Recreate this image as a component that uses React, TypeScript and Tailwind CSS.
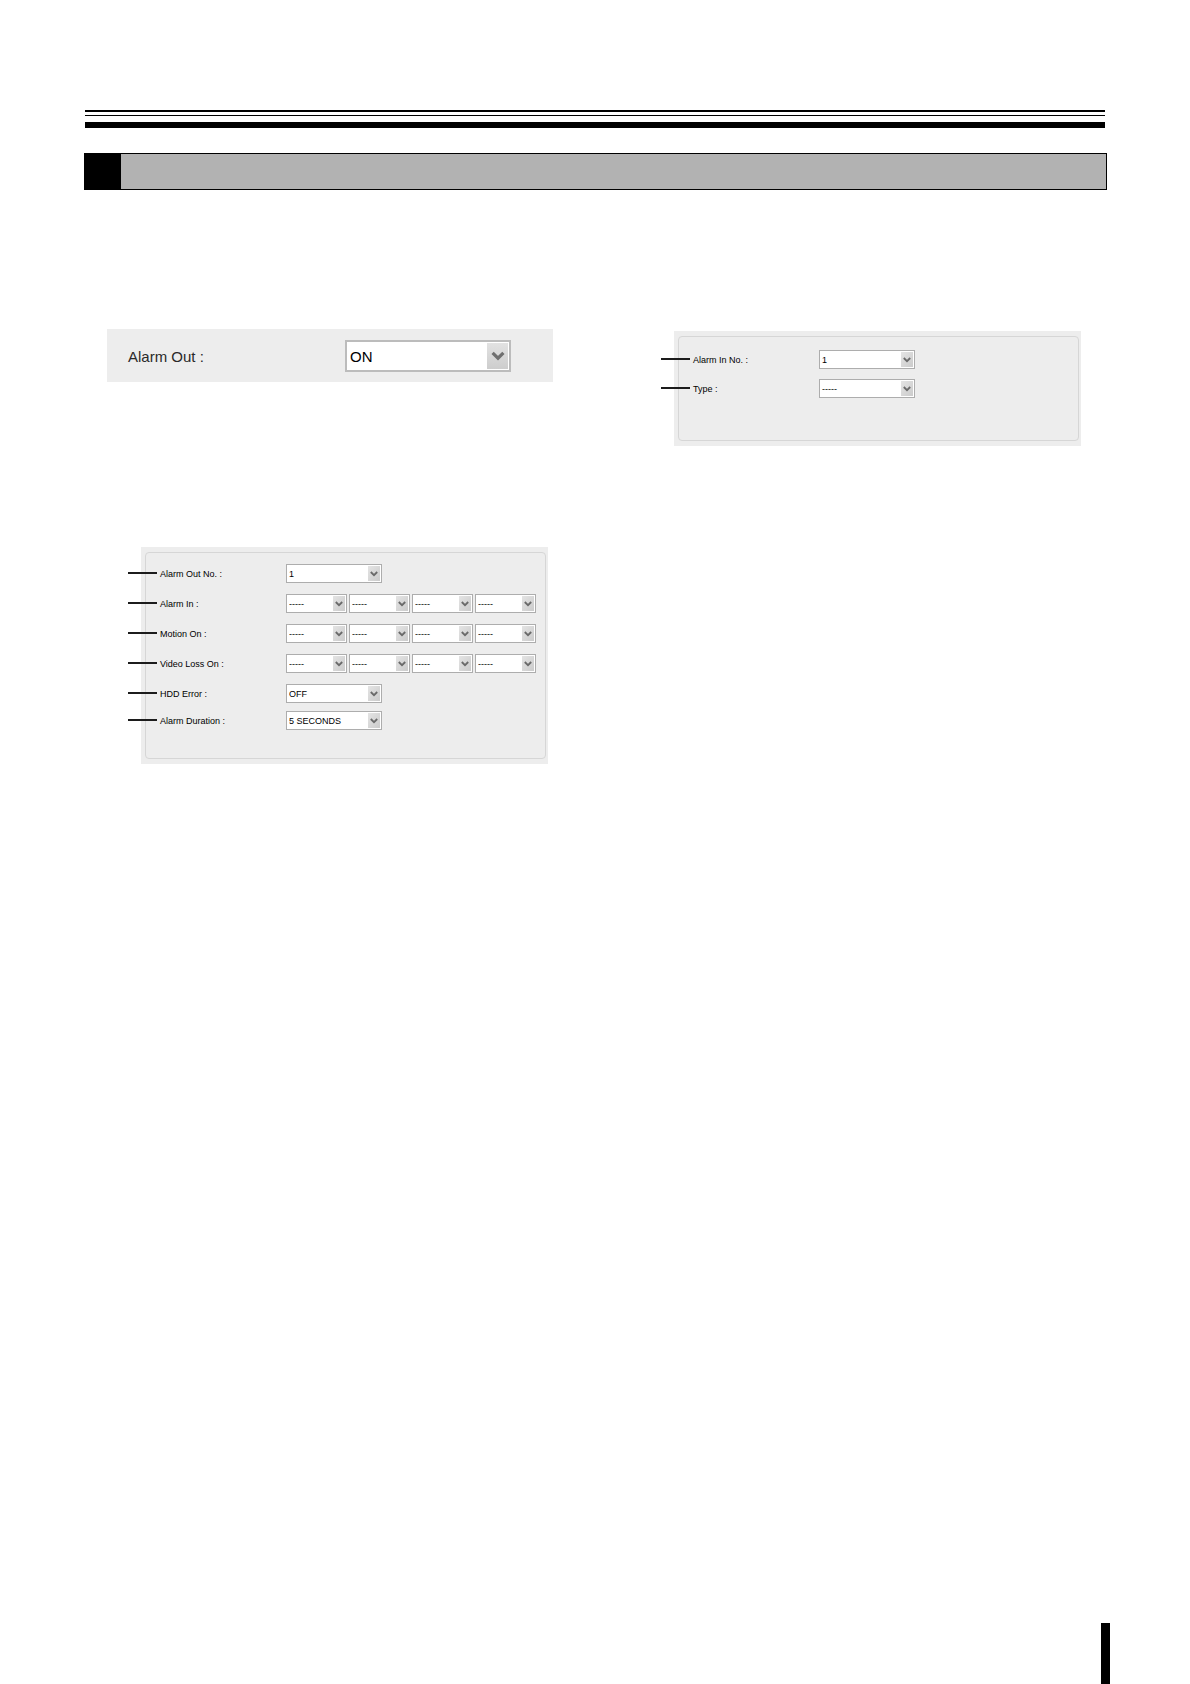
import React from 'react';

type SelectProps = {
  id?: string;
  labelledBy?: string;
  value: string;
  className: string;
};

type Row = {
  id: string;
  label: string;
  values: string[];
};

const alarmOutRows: Row[] = [
  { id: 'alarm-out-no', label: 'Alarm Out No. :', values: ['1'] },
  { id: 'alarm-in', label: 'Alarm In :', values: ['-----', '-----', '-----', '-----'] },
  { id: 'motion-on', label: 'Motion On :', values: ['-----', '-----', '-----', '-----'] },
  { id: 'video-loss-on', label: 'Video Loss On :', values: ['-----', '-----', '-----', '-----'] },
  { id: 'hdd-error', label: 'HDD Error :', values: ['OFF'] },
];

const durationRow: Row = { id: 'alarm-duration', label: 'Alarm Duration :', values: ['5 SECONDS'] };

const alarmInRows: Row[] = [
  { id: 'alarm-in-no', label: 'Alarm In No. :', values: ['1'] },
  { id: 'alarm-type', label: 'Type :', values: ['-----'] },
];

function SmallSelect({ id, labelledBy, value, className }: SelectProps) {
  return (
    <div className={`relative shrink-0 ${className}`}>
      <select
        id={id}
        aria-labelledby={labelledBy}
        defaultValue={value}
        className="block h-[19px] w-full appearance-none border border-[#adadad] bg-white pl-[2px] pr-4 leading-4 text-black"
      >
        <option>{value}</option>
      </select>
      <span className="pointer-events-none absolute inset-y-[2px] right-[2px] flex w-3 items-center justify-center bg-linear-to-br from-[#e4e4e4] to-[#cbcbcb]">
        <svg viewBox="0 0 8 6" className="h-[6px] w-2" fill="none" stroke="#6a6a6a" strokeWidth="1.8">
          <path d="M0.8 1 L4 4.2 L7.2 1" />
        </svg>
      </span>
    </div>
  );
}

function FieldRow({ row }: { row: Row }) {
  const single = row.values.length === 1;
  return (
    <div className="relative flex items-center">
      {/* leader line running in from the page margin */}
      <span className="absolute -left-8 top-2 h-[2px] w-[29px] bg-[#1c1c1c]" />
      <label id={`${row.id}-label`} htmlFor={row.id} className="w-[126px] shrink-0 whitespace-nowrap">
        {row.label}
      </label>
      <div className="flex gap-[2px]">
        {row.values.map((value, i) => (
          <SmallSelect
            key={i}
            id={i === 0 ? row.id : undefined}
            labelledBy={`${row.id}-label`}
            value={value}
            className={single ? 'w-24' : 'w-[61px]'}
          />
        ))}
      </div>
    </div>
  );
}

function Panel({ children }: { children: React.ReactNode }) {
  return (
    <div className="w-full max-w-[407px] bg-[#ededed] pb-[5px] pl-1 pr-[2px] pt-[5px] text-[9px] leading-4 text-black">
      <div className="rounded-[4px] border border-[#d6d6d6] pl-[14px]">{children}</div>
    </div>
  );
}

export default function App() {
  return (
    <div className="flex min-h-screen flex-col bg-white font-['Liberation_Sans',sans-serif]">
      <header className="pl-[84px] pr-[83px] pt-[110px]">
        <div className="ml-px mr-[2px]">
          <div className="h-[2px] bg-black" />
          <div className="mt-[3px] h-px bg-black" />
          <div className="mt-[6px] h-[6px] bg-black" />
        </div>
        <div className="mt-[25px] flex h-[37px] border border-black bg-[#b2b2b2]">
          <div className="w-9 bg-black" />
        </div>
      </header>

      <main className="grid grid-cols-2 px-[84px]">
        <section className="pl-[23px] pt-[139px]">
          <div className="flex h-[53px] w-full max-w-[446px] items-center bg-[#ededed] pl-[21px] text-[15px] text-[#2a2a2a]">
            <label htmlFor="alarm-out" className="w-[217px] shrink-0 pt-[3px]">
              Alarm Out :
            </label>
            <div className="relative w-[166px] pt-px">
              <select
                id="alarm-out"
                defaultValue="ON"
                className="block h-8 w-full appearance-none border-2 border-[#bcbcbc] bg-white pl-[3px] pr-6 pt-[3px] text-black"
              >
                <option>ON</option>
              </select>
              <span className="pointer-events-none absolute bottom-[3px] right-[3px] top-1 flex w-[21px] items-center justify-center bg-linear-to-b from-[#e2e2e2] to-[#cdcdcd]">
                <svg viewBox="0 0 14 10" className="h-[10px] w-[14px]" fill="none" stroke="#6f6f6f" strokeWidth="3.2">
                  <path d="M1.6 1.8 L7 7.2 L12.4 1.8" />
                </svg>
              </span>
            </div>
          </div>

          <div className="pl-[34px] pt-[165px]">
            <Panel>
              <div className="flex flex-col gap-[11px] pt-[11px]">
                {alarmOutRows.map((row) => (
                  <FieldRow key={row.id} row={row} />
                ))}
              </div>
              <div className="pb-7 pt-2">
                <FieldRow row={durationRow} />
              </div>
            </Panel>
          </div>
        </section>

        <section className="pl-[79px] pt-[141px]">
          <Panel>
            <div className="flex flex-col gap-[10px] pb-[42px] pt-[13px]">
              {alarmInRows.map((row) => (
                <FieldRow key={row.id} row={row} />
              ))}
            </div>
          </Panel>
        </section>
      </main>

      <footer className="mt-auto flex justify-end pr-20">
        <div className="h-[61px] w-[9px] bg-black" />
      </footer>
    </div>
  );
}
